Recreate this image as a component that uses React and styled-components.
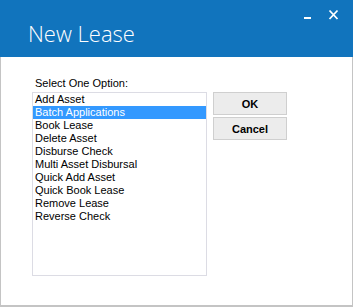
import React from "react";
import styled, { createGlobalStyle } from "styled-components";

const GlobalStyle = createGlobalStyle`
  html, body {
    margin: 0;
    padding: 0;
    background: #fff;
  }
`;

const options = [
  "Add Asset",
  "Batch Applications",
  "Book Lease",
  "Delete Asset",
  "Disburse Check",
  "Multi Asset Disbursal",
  "Quick Add Asset",
  "Quick Book Lease",
  "Remove Lease",
  "Reverse Check",
];

const App = () => {
  const [selected, setSelected] = React.useState(1);

  return (
    <>
      <GlobalStyle />
      <Window>
        <TitleBar>
          <Title>New Lease</Title>
          <WindowControls>
            <ControlButton aria-label="minimize">
              <svg width="9" height="20" viewBox="0 0 9 20">
                <rect x="1" y="17" width="7" height="2" fill="#fff" />
              </svg>
            </ControlButton>
            <ControlButton aria-label="close">
              <svg width="11" height="20" viewBox="0 0 11 20">
                <path d="M1.5 10.5 L9.5 19 M9.5 10.5 L1.5 19" stroke="#fff" strokeWidth="1.8" />
              </svg>
            </ControlButton>
          </WindowControls>
        </TitleBar>
        <Body>
          <Label>Select One Option:</Label>
          <Row>
            <ListBox>
              {options.map((opt, index) => (
                <ListItem
                  key={opt}
                  $active={index === selected}
                  onClick={() => setSelected(index)}
                >
                  {opt}
                </ListItem>
              ))}
            </ListBox>
            <ButtonColumn>
              <DialogButton type="button">OK</DialogButton>
              <DialogButton type="button">Cancel</DialogButton>
            </ButtonColumn>
          </Row>
        </Body>
      </Window>
    </>
  );
};

const Window = styled.div`
  width: 353px;
  height: 307px;
  box-sizing: border-box;
  border: 1px solid #c4c4c4;
  border-top: 0;
  border-bottom-width: 2px;
  display: flex;
  flex-direction: column;
  background: #fff;
  font-family: "Liberation Sans", Arial, sans-serif;
`;

const TitleBar = styled.div`
  height: 57px;
  margin: 0 -1px;
  background: #1174bd;
  display: flex;
  align-items: flex-start;
  justify-content: space-between;
`;

const Title = styled.div`
  margin: 19px 0 0 28px;
  color: #fff;
  font-family: "Segoe UI", "Open Sans", "Noto Sans", sans-serif;
  font-weight: 300;
  font-size: 22px;
  line-height: 28px;
`;

const WindowControls = styled.div`
  display: flex;
  gap: 16px;
  margin: 0 14px 0 0;
`;

const ControlButton = styled.div`
  display: flex;
  align-items: flex-start;
`;

const Body = styled.div`
  padding: 19px 0 0 31px;
  display: flex;
  flex-direction: column;
`;

const Label = styled.div`
  font-size: 11px;
  line-height: 14px;
  color: #000;
  padding-left: 3px;
  margin-bottom: 2px;
`;

const Row = styled.div`
  display: flex;
  align-items: flex-start;
  gap: 6px;
`;

const ListBox = styled.div`
  width: 175px;
  height: 184px;
  box-sizing: border-box;
  border: 1px solid #dcdce4;
  display: flex;
  flex-direction: column;
`;

const ListItem = styled.div`
  height: 13px;
  line-height: 13px;
  font-size: 11px;
  padding-left: 2px;
  white-space: nowrap;
  cursor: default;
  color: ${(p) => (p.$active ? "#fff" : "#000")};
  background: ${(p) => (p.$active ? "#3399ff" : "transparent")};
`;

const ButtonColumn = styled.div`
  display: flex;
  flex-direction: column;
  gap: 2px;
`;

const DialogButton = styled.button`
  width: 74px;
  height: 23px;
  box-sizing: border-box;
  border: 1px solid #cfcfcf;
  background: #ececec;
  font-family: "Liberation Sans", Arial, sans-serif;
  font-weight: bold;
  font-size: 11px;
  color: #000;
  padding: 0;
  cursor: pointer;
`;

export default App;
